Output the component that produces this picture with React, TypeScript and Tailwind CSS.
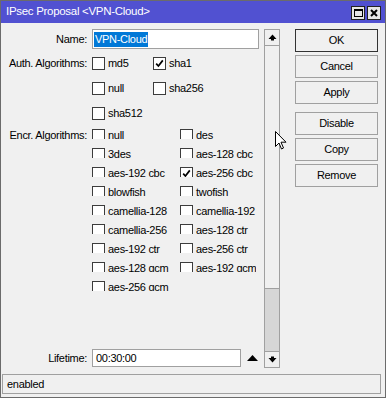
import React from "react";

const font = { fontFamily: '"Liberation Sans", Arial, sans-serif' };

function Box({ checked }: { checked?: boolean }) {
  return (
    <span className="flex h-[13px] w-[13px] shrink-0 items-center justify-center border border-[#3c3c3c] bg-white">
      {checked ? (
        <svg width="9" height="9" viewBox="0 0 9 9">
          <path d="M1.2 4.6 L3.4 7 L7.8 1.4" stroke="#000" strokeWidth="1.7" fill="none" />
        </svg>
      ) : null}
    </span>
  );
}

function Check({ label, checked }: { label: string; checked?: boolean }) {
  return (
    <div className="flex h-[13px] items-center gap-[3px]">
      <Box checked={checked} />
      <span className="leading-[13px]">{label}</span>
    </div>
  );
}

// rows under Encr. Algorithms are cut off at the bottom in the reference
function ClippedCheck({ label, checked }: { label: string; checked?: boolean }) {
  return (
    <div className="flex h-[10px] items-start gap-[3px] overflow-hidden">
      <Box checked={checked} />
      <span className="leading-[13px]">{label}</span>
    </div>
  );
}

function Btn({ label, primary }: { label: string; primary?: boolean }) {
  return (
    <button
      className={
        "flex h-[23px] w-[83px] items-center justify-center bg-[#f0f0f0] text-black " +
        (primary ? "border border-[#333]" : "border border-[#a0a0a0]")
      }
    >
      {label}
    </button>
  );
}

function Arrow({ up }: { up?: boolean }) {
  return (
    <svg width="9" height="7" viewBox="0 0 9 7">
      {up ? (
        <path d="M4.5 0.5 L8.5 5 L6 5 L6 6.5 L3 6.5 L3 5 L0.5 5 Z" fill="#000" />
      ) : (
        <path d="M3 0.5 L6 0.5 L6 2 L8.5 2 L4.5 6.5 L0.5 2 L3 2 Z" fill="#000" />
      )}
    </svg>
  );
}

const encr: [string, boolean?][] = [
  ["null"],
  ["des"],
  ["3des"],
  ["aes-128 cbc"],
  ["aes-192 cbc"],
  ["aes-256 cbc", true],
  ["blowfish"],
  ["twofish"],
  ["camellia-128"],
  ["camellia-192"],
  ["camellia-256"],
  ["aes-128 ctr"],
  ["aes-192 ctr"],
  ["aes-256 ctr"],
  ["aes-128 gcm"],
  ["aes-192 gcm"],
  ["aes-256 gcm"],
];

export default function App() {
  return (
    <div
      className="relative flex h-[398px] w-[386px] flex-col border border-[#6b6b6b] bg-[#f0f0f0] text-[11px] tracking-[-0.3px] text-black"
      style={font}
    >
      {/* title bar */}
      <div className="flex h-[22px] shrink-0 items-center justify-between bg-[#5151d1] pl-[5px] pr-[4px]">
        <span className="text-[11.5px] text-white">IPsec Proposal &lt;VPN-Cloud&gt;</span>
        <div className="flex gap-[2px] pt-[2px]">
          <span className="flex h-[14px] w-[14px] items-center justify-center border border-[#222] bg-[#e6e6e6]">
            <span className="h-[8px] w-[9px] border border-t-2 border-black" />
          </span>
          <span className="flex h-[14px] w-[14px] items-center justify-center border border-[#222] bg-[#e6e6e6]">
            <svg width="8" height="8" viewBox="0 0 8 8">
              <path d="M1 1 L7 7 M7 1 L1 7" stroke="#000" strokeWidth="2" />
            </svg>
          </span>
        </div>
      </div>

      {/* main */}
      <div className="flex flex-1 pt-[6px]">
        {/* form */}
        <div className="flex w-[262px] flex-col pb-[2px]">
          <div className="flex h-[20px] items-center">
            <span className="w-[86px] text-right">Name:</span>
            <div className="ml-[5px] flex h-[20px] w-[167px] items-center border border-[#a0a0a0] bg-white pl-[1px]">
              <span className="bg-[#0078d7] px-[1px] leading-[15px] text-white">VPN-Cloud</span>
            </div>
          </div>

          <div className="mt-[8px] flex">
            <span className="w-[86px] text-right leading-[13px]">Auth. Algorithms:</span>
            <div className="ml-[5px] grid grid-cols-[61px_auto] gap-y-[12px]">
              <Check label="md5" />
              <Check label="sha1" checked />
              <Check label="null" />
              <Check label="sha256" />
              <Check label="sha512" />
            </div>
          </div>

          <div className="mt-[9px] flex">
            <span className="w-[86px] text-right leading-[13px]">Encr. Algorithms:</span>
            <div className="ml-[5px] grid grid-cols-[88px_auto] gap-y-[9px]">
              {encr.map(([l, c]) => (
                <ClippedCheck key={l} label={l} checked={c} />
              ))}
            </div>
          </div>

          <div className="flex-1" />

          <div className="flex h-[18px] items-center">
            <span className="w-[86px] text-right">Lifetime:</span>
            <div className="ml-[5px] flex h-[18px] w-[149px] items-center border border-[#a0a0a0] bg-white pl-[3px]">
              00:30:00
            </div>
            <span className="ml-[6px] flex">
              <svg width="11" height="6" viewBox="0 0 11 6">
                <path d="M5.5 0 L11 6 L0 6 Z" fill="#000" />
              </svg>
            </span>
          </div>
        </div>

        {/* scrollbar */}
        <div className="ml-[1px] flex h-[339px] w-[16px] flex-col border border-[#a0a0a0] bg-[#f0f0f0]">
          <div className="flex h-[16px] items-center justify-center border-b border-[#a0a0a0]">
            <Arrow up />
          </div>
          <div className="h-[243px] border-b border-[#a0a0a0] bg-[#f0f0f0]" />
          <div className="flex-1 bg-[#d6d6d6]" />
          <div className="flex h-[16px] items-center justify-center border-t border-[#a0a0a0]">
            <Arrow />
          </div>
        </div>

        {/* buttons */}
        <div className="ml-[15px] flex flex-col">
          <div className="flex flex-col gap-[3px]">
            <Btn label="OK" primary />
            <Btn label="Cancel" />
            <Btn label="Apply" />
          </div>
          <div className="mt-[8px] flex flex-col gap-[3px]">
            <Btn label="Disable" />
            <Btn label="Copy" />
            <Btn label="Remove" />
          </div>
        </div>
      </div>

      {/* status bar */}
      <div className="mx-[1px] mb-[3px] mr-[4px] mt-[5px] flex h-[20px] items-center border border-[#a0a0a0] pl-[4px]">
        enabled
      </div>

      {/* mouse pointer */}
      <svg className="absolute left-[274px] top-[130px]" width="13" height="20" viewBox="0 0 13 20">
        <path d="M0.5 0.5 L0.5 15.5 L4 12 L6.5 18 L8.5 17 L6 11.2 L11 11.2 Z" fill="#fff" stroke="#000" strokeWidth="1" />
      </svg>
    </div>
  );
}
